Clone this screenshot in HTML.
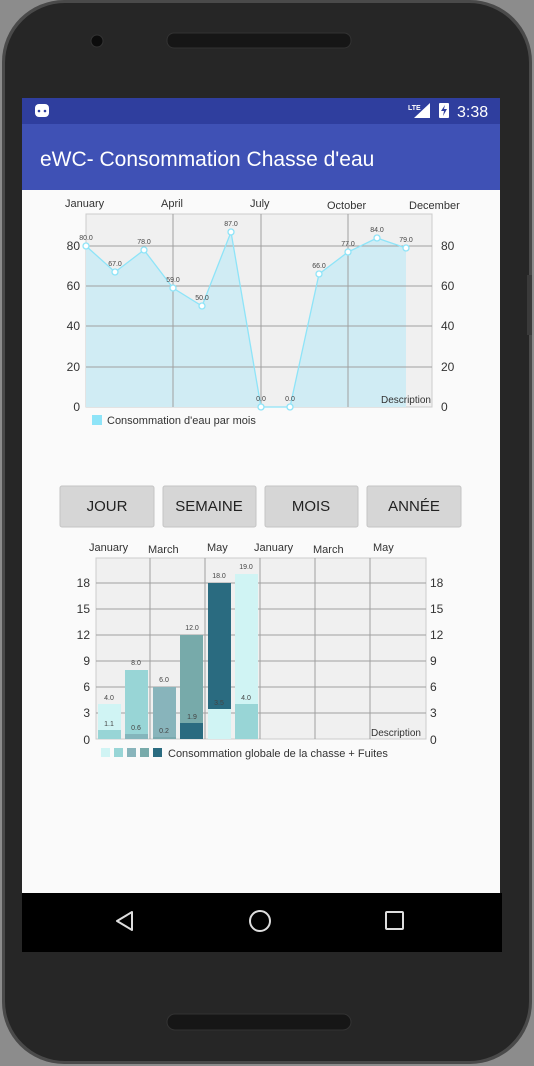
<!DOCTYPE html>
<html><head><meta charset="utf-8"><style>
html,body{margin:0;padding:0;background:#8c8c8c;}
svg{display:block;font-family:"Liberation Sans",sans-serif;}
</style></head><body>
<svg width="534" height="1066" viewBox="0 0 534 1066" xmlns="http://www.w3.org/2000/svg">
<rect width="534" height="1066" fill="#8c8c8c"/>
<rect x="2" y="0" width="530" height="1064" rx="62" fill="#4a4a4a"/>
<rect x="5" y="3" width="524" height="1058" rx="60" fill="#262626"/>
<rect x="167" y="33" width="184" height="15" rx="7" fill="#161616" stroke="#333"/>
<circle cx="97" cy="41" r="6" fill="#0c0c0c" stroke="#333"/>
<rect x="167" y="1014" width="184" height="16" rx="8" fill="#161616" stroke="#333"/>
<rect x="527" y="275" width="5" height="60" fill="#3a3a3a"/>
<!-- screen -->
<rect x="22" y="98" width="478" height="795" fill="#fafafa"/>
<rect x="22" y="98" width="478" height="26" fill="#2f3e9e"/>
<rect x="22" y="124" width="478" height="66" fill="#3f51b5"/>
<rect x="35" y="104" width="14" height="13" rx="4" fill="#fff"/>
<circle cx="39" cy="111" r="1.3" fill="#2f3e9e"/><circle cx="45" cy="111" r="1.3" fill="#2f3e9e"/>
<text x="408" y="110" font-size="7" fill="#fff" font-weight="bold">LTE</text>
<path d="M414 118 L430 103 L430 118 Z" fill="#fff"/>
<rect x="439" y="103" width="10" height="15" rx="1" fill="#fff"/>
<path d="M445 105 L441 111 L444 111 L443 116 L447 109 L444 109 Z" fill="#2f3e9e"/>
<text x="457" y="117" font-size="16" fill="#fff">3:38</text>
<text x="40" y="166" font-size="21" fill="#fff">eWC- Consommation Chasse d'eau</text>

<!-- chart 1 -->
<g font-size="11" fill="#333">
<text x="65" y="207">January</text><text x="161" y="207">April</text><text x="250" y="207">July</text><text x="327" y="209">October</text><text x="409" y="209">December</text>
</g>
<rect x="86" y="214" width="346" height="193" fill="#f0f0f0" stroke="#ccc"/>
<path d="M86 246 L115 272 L144 250 L173 288 L202 306 L231 232 L261 407 L290 407 L319 274 L348 252 L377 238 L406 248 L406 407 L86 407 Z" fill="#d0ecf4"/>
<g stroke="#a0a0a0" stroke-width="1">
<line x1="86" y1="246" x2="432" y2="246"/><line x1="86" y1="286" x2="432" y2="286"/><line x1="86" y1="326" x2="432" y2="326"/><line x1="86" y1="367" x2="432" y2="367"/>
<line x1="173" y1="214" x2="173" y2="407"/><line x1="261" y1="214" x2="261" y2="407"/><line x1="348" y1="214" x2="348" y2="407"/>
</g>
<polyline points="86,246 115,272 144,250 173,288 202,306 231,232 261,407 290,407 319,274 348,252 377,238 406,248" fill="none" stroke="#8ee4f8" stroke-width="1.3"/>
<g fill="#fff" stroke="#8ee4f8" stroke-width="1.3">
<circle cx="86" cy="246" r="3"/><circle cx="115" cy="272" r="3"/><circle cx="144" cy="250" r="3"/><circle cx="173" cy="288" r="3"/><circle cx="202" cy="306" r="3"/><circle cx="231" cy="232" r="3"/><circle cx="261" cy="407" r="3"/><circle cx="290" cy="407" r="3"/><circle cx="319" cy="274" r="3"/><circle cx="348" cy="252" r="3"/><circle cx="377" cy="238" r="3"/><circle cx="406" cy="248" r="3"/>
</g>
<g font-size="7" fill="#444" text-anchor="middle">
<text x="86" y="240">80.0</text><text x="115" y="266">67.0</text><text x="144" y="244">78.0</text><text x="173" y="282">59.0</text><text x="202" y="300">50.0</text><text x="231" y="226">87.0</text><text x="261" y="401">0.0</text><text x="290" y="401">0.0</text><text x="319" y="268">66.0</text><text x="348" y="246">77.0</text><text x="377" y="232">84.0</text><text x="406" y="242">79.0</text>
</g>
<g font-size="12" fill="#333">
<g text-anchor="end"><text x="80" y="250">80</text><text x="80" y="290">60</text><text x="80" y="330">40</text><text x="80" y="371">20</text><text x="80" y="411">0</text></g>
<text x="441" y="250">80</text><text x="441" y="290">60</text><text x="441" y="330">40</text><text x="441" y="371">20</text><text x="441" y="411">0</text>
</g>
<text x="431" y="403" font-size="10" fill="#333" text-anchor="end">Description</text>
<rect x="92" y="415" width="10" height="10" fill="#8ee4f8"/>
<text x="107" y="424" font-size="11" fill="#333">Consommation d'eau par mois</text>

<!-- buttons -->
<g font-size="15" fill="#222" text-anchor="middle">
<rect x="60" y="486" width="94" height="41" rx="2" fill="#d6d6d6" stroke="#c4c4c4"/><text x="107" y="511">JOUR</text>
<rect x="163" y="486" width="93" height="41" rx="2" fill="#d6d6d6" stroke="#c4c4c4"/><text x="209" y="511">SEMAINE</text>
<rect x="265" y="486" width="93" height="41" rx="2" fill="#d6d6d6" stroke="#c4c4c4"/><text x="311" y="511">MOIS</text>
<rect x="367" y="486" width="94" height="41" rx="2" fill="#d6d6d6" stroke="#c4c4c4"/><text x="414" y="511">ANNÉE</text>
</g>

<!-- chart 2 -->
<g font-size="11" fill="#333">
<text x="89" y="551">January</text><text x="148" y="553">March</text><text x="207" y="551">May</text><text x="254" y="551">January</text><text x="313" y="553">March</text><text x="373" y="551">May</text>
</g>
<rect x="96" y="558" width="330" height="181" fill="#f0f0f0" stroke="#ccc"/>
<g stroke="#a0a0a0">
<line x1="96" y1="583" x2="426" y2="583"/><line x1="96" y1="609" x2="426" y2="609"/><line x1="96" y1="635" x2="426" y2="635"/><line x1="96" y1="661" x2="426" y2="661"/><line x1="96" y1="687" x2="426" y2="687"/><line x1="96" y1="713" x2="426" y2="713"/>
<line x1="150" y1="558" x2="150" y2="739"/><line x1="205" y1="558" x2="205" y2="739"/><line x1="260" y1="558" x2="260" y2="739"/><line x1="315" y1="558" x2="315" y2="739"/><line x1="370" y1="558" x2="370" y2="739"/>
</g>
<rect x="98" y="704" width="23" height="35" fill="#d0f4f4"/><rect x="98" y="730" width="23" height="9" fill="#98d5d6"/>
<rect x="125" y="670" width="23" height="69" fill="#98d5d6"/><rect x="125" y="734" width="23" height="5" fill="#84b6bc"/>
<rect x="153" y="687" width="23" height="52" fill="#88b4bb"/><rect x="153" y="737" width="23" height="2" fill="#7aa9ae"/>
<rect x="180" y="635" width="23" height="104" fill="#77aaaa"/><rect x="180" y="723" width="23" height="16" fill="#2a6b80"/>
<rect x="208" y="583" width="23" height="156" fill="#2a6b80"/><rect x="208" y="709" width="23" height="30" fill="#d0f4f4"/>
<rect x="235" y="574" width="23" height="165" fill="#d0f4f4"/><rect x="235" y="704" width="23" height="35" fill="#98d5d6"/>
<g font-size="7" fill="#444" text-anchor="middle">
<text x="109" y="700">4.0</text><text x="109" y="726">1.1</text>
<text x="136" y="665">8.0</text><text x="136" y="730">0.6</text>
<text x="164" y="682">6.0</text><text x="164" y="733">0.2</text>
<text x="192" y="630">12.0</text><text x="192" y="719">1.9</text>
<text x="219" y="578">18.0</text><text x="219" y="705">3.5</text>
<text x="246" y="569">19.0</text><text x="246" y="700">4.0</text>
</g>
<g font-size="12" fill="#333">
<g text-anchor="end"><text x="90" y="587">18</text><text x="90" y="613">15</text><text x="90" y="639">12</text><text x="90" y="665">9</text><text x="90" y="691">6</text><text x="90" y="717">3</text><text x="90" y="744">0</text></g>
<text x="430" y="587">18</text><text x="430" y="613">15</text><text x="430" y="639">12</text><text x="430" y="665">9</text><text x="430" y="691">6</text><text x="430" y="717">3</text><text x="430" y="744">0</text>
</g>
<text x="421" y="736" font-size="10" fill="#333" text-anchor="end">Description</text>
<rect x="101" y="748" width="9" height="9" fill="#d0f4f4"/><rect x="114" y="748" width="9" height="9" fill="#98d5d6"/><rect x="127" y="748" width="9" height="9" fill="#88b4bb"/><rect x="140" y="748" width="9" height="9" fill="#77aaaa"/><rect x="153" y="748" width="9" height="9" fill="#2a6b80"/>
<text x="168" y="757" font-size="11" fill="#333">Consommation globale de la chasse + Fuites</text>

<!-- nav bar -->
<rect x="22" y="893" width="480" height="59" fill="#000"/>
<path d="M132 912 L117 921 L132 930 Z" fill="none" stroke="#ddd" stroke-width="2" stroke-linejoin="round"/>
<circle cx="260" cy="921" r="10" fill="none" stroke="#ddd" stroke-width="2"/>
<rect x="386" y="912" width="17" height="17" rx="1" fill="none" stroke="#ddd" stroke-width="2"/>
</svg>
</body></html>
